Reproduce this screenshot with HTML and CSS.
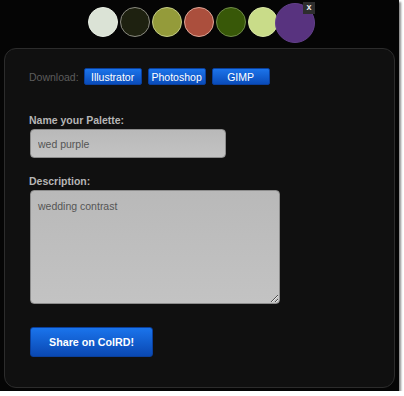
FILE: index.html
```html
<!DOCTYPE html>
<html lang="en">

<head>
  <meta charset="UTF-8">
  <meta name="viewport" content="width=device-width, initial-scale=1.0">
  <title>Save Palette</title>
  <link rel="stylesheet" href="styles.css">
</head>

<body>
  <div class="page">
    <!-- palette swatches -->
    <div class="swatches">
      <span class="swatch sw1"></span>
      <span class="swatch sw2"></span>
      <span class="swatch sw3"></span>
      <span class="swatch sw4"></span>
      <span class="swatch sw5"></span>
      <span class="swatch sw6"></span>
      <span class="swatch sw7 active">
        <span class="close">x</span>
      </span>
    </div>

    <div class="panel">
      <div class="download">
        <span class="download-label">Download:</span>
        <a href="#" class="btn small">Illustrator</a>
        <a href="#" class="btn small">Photoshop</a>
        <a href="#" class="btn small">GIMP</a>
      </div>

      <label class="field-label" for="name">Name your Palette:</label>
      <input type="text" id="name" class="field name-field" value="wed purple">

      <label class="field-label desc-label" for="desc">Description:</label>
      <textarea id="desc" class="field desc-field">wedding contrast</textarea>

      <a href="#" class="btn share">Share on ColRD!</a>
    </div>
  </div>
</body>

</html>
```

FILE: styles.css
```css
body {
  margin: 0;
  padding: 0;
  background-color: #fff;
  font-family: 'Liberation Sans', Arial, sans-serif;
}

.page {
  width: 399px;
  height: 391px;
  background-color: #050505;
  box-shadow: 2px 2px 2px #8a8a8a;
  overflow: hidden;
}

.swatches {
  display: flex;
  align-items: center;
  height: 46px;
  padding-left: 88px;
  box-sizing: border-box;
}

.swatch {
  width: 30px;
  height: 30px;
  border-radius: 50%;
  box-sizing: border-box;
  border: 1.5px solid transparent;
  margin-right: 2px;
  margin-top: -2px;
}

.sw1 { background: #dbe3d6; border-color: #e8eee4; }
.sw2 { background: #1e2110; border-color: #8a8a80; }
.sw3 { background: #949b3a; border-color: #c4cc84; }
.sw4 { background: #ab4f3d; border-color: #e0a596; }
.sw5 { background: #385808; border-color: #6f8a48; }
.sw6 { background: #c9dc89; border-color: #d8e6a4; }

.sw7 {
  position: relative;
  width: 40px;
  height: 40px;
  margin-left: -5px;
  margin-top: 0;
  background: #58337f;
  border-color: #62408a;
}

.close {
  position: absolute;
  top: -2px;
  right: -1px;
  width: 12px;
  height: 12px;
  background: #2e2e2e;
  color: #eee;
  font-size: 9px;
  font-weight: bold;
  line-height: 11px;
  text-align: center;
}

.panel {
  margin: 2px 4px 0 4px;
  height: 340px;
  box-sizing: border-box;
  background-color: #101010;
  border: 1px solid #2c2c2c;
  border-radius: 12px;
  padding: 19px 24px 0 24px;
}

.download {
  display: flex;
  align-items: center;
  gap: 6px;
  height: 17px;
}

.download-label {
  color: #5c5c5c;
  font-size: 10.5px;
  margin-right: -1px;
}

.btn {
  display: inline-flex;
  align-items: center;
  justify-content: center;
  box-sizing: border-box;
  color: #fff;
  text-decoration: none;
  background: linear-gradient(#1c74ea, #0a4cba);
  border: 1px solid #0a3f9c;
  border-radius: 2px;
}

.small {
  width: 58px;
  height: 17px;
  font-size: 10.5px;
}

.field-label {
  display: block;
  margin-top: 28px;
  color: #b6b6b6;
  font-size: 10.5px;
  font-weight: bold;
  line-height: 14px;
}

.desc-label {
  margin-top: 16px;
}

.field {
  display: block;
  box-sizing: border-box;
  margin: 2px 0 0 1px;
  padding: 0 7px;
  font-family: 'Liberation Sans', Arial, sans-serif;
  font-size: 10.5px;
  color: #555;
  background: linear-gradient(#b9b9b9, #c3c3c3);
  border: 1px solid #8c8c8c;
  border-radius: 4px;
  outline: none;
}

.name-field {
  width: 196px;
  height: 29px;
}

.desc-field {
  width: 250px;
  height: 114px;
  padding-top: 9px;
  resize: vertical;
}

.share {
  margin: 23px 0 0 1px;
  width: 123px;
  height: 30px;
  font-size: 10.7px;
  font-weight: bold;
  background: linear-gradient(#1a74ec, #0a48b2);
  border-radius: 3px;
}
```
